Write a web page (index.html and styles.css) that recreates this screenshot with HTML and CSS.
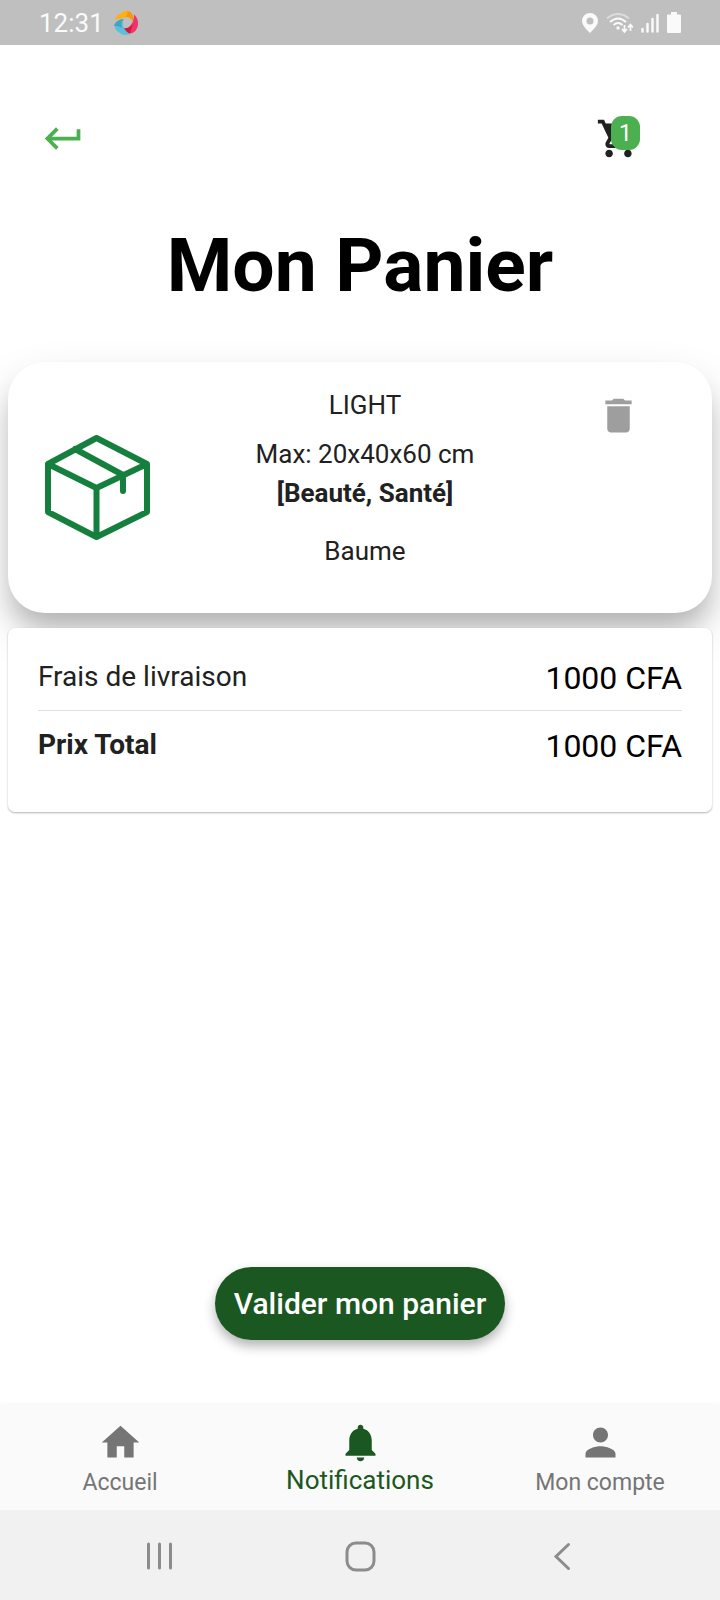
FILE: index.html
```html
<!DOCTYPE html>
<html lang="fr">
<head>
<meta charset="utf-8">
<meta name="viewport" content="width=device-width, initial-scale=1">
<title>Mon Panier</title>
<link rel="stylesheet" href="styles.css">
</head>
<body class="screen">
  <div class="status">
    <div class="status-group">
      <time class="clock">12:31</time>
      <svg class="swirl" viewBox="0 0 24 24" aria-hidden="true">
        <path fill="#ffb010" d="M1 9C2 5 4 3 7 2.500C8 1 10 0 13 0C17 0 20 4 19 10C17 6 11 5 6 8C4 8 2 8 1 9z"/>
        <path fill="#f89808" d="M13 0C17 0 20 4 19 10C16 6 14 5 10 6C13 5 14 3 13 0z"/>
        <path fill="#f0346a" d="M20 3.500C23 6 24.500 10 24 14C23 19 20 23 15 22.500C12 22 10 20 10 17C15 18 20 13 20 3.500z"/>
        <path fill="#d01840" d="M10 17C14 18 17 16 19 12C18 16 17 19 16 22.500C13 22 10 20 10 17z"/>
        <path fill="#5cc0dc" d="M10 8C7 13 10 20 16 23C12 25 8 24 6 22C2 20 0 17 1 13C3 10 6 8 10 8z"/>
        <path fill="#42a4c0" d="M10 8C7 10 7 14 8 17C5 15 2 15 0 15C1 11 5 8 10 8z"/>
      </svg>
    </div>
    <div class="status-group status-icons">
      <svg width="16" height="20" viewBox="0 0 16 20" aria-hidden="true"><path fill="#fafafa" fill-rule="evenodd" d="M8 0a8 8 0 0 1 8 8c0 4-4 8-8 12C4 16 0 12 0 8a8 8 0 0 1 8-8zm0 4.500a3.500 3.500 0 1 0 0 7 3.500 3.500 0 0 0 0-7z"/></svg>
      <svg width="27" height="20" viewBox="0 0 27 20" aria-hidden="true">
        <g fill="none" stroke="#fafafa" stroke-width="2">
          <path stroke="#dcdcdc" d="M1 5.500Q12-3.500 23 5.500"/>
          <path d="M4 9Q12 2 20 9"/><path d="M7.500 12Q12 8 16.500 12"/>
          <path stroke-width="1.700" d="M18.500 12v6.500M16 16l2.500 3 2.500-3M24.500 18v-6.500M22 14.500l2.500-3 2.500 3"/>
        </g>
        <circle cx="12" cy="15" r="1.700" fill="#fafafa"/>
      </svg>
      <svg width="18" height="20" viewBox="0 0 18 20" aria-hidden="true"><path stroke="#fafafa" stroke-width="2.500" stroke-linecap="round" d="M1.500 16v2.500M6.500 11v7.500M11.500 6v12.500M16.500 2v16.500"/></svg>
      <svg width="14" height="21" viewBox="0 0 14 21" aria-hidden="true"><path fill="#fafafa" d="M4 0h6v2.500h3q1 0 1 1V20q0 1-1 1H1q-1 0-1-1V3.500q0-1 1-1h3z"/></svg>
    </div>
  </div>

  <header class="toolbar">
    <button class="icon-button back" aria-label="Retour">
      <svg class="icon" viewBox="0 0 24 24"><path d="M19 7v4H5.830l3.580-3.590L8 6l-6 6 6 6 1.410-1.410L5.830 13H21V7z"/></svg>
    </button>
    <button class="icon-button cart" aria-label="Panier">
      <svg class="icon" viewBox="0 0 24 24"><path d="M7 18c-1.100 0-1.990.9-1.990 2S5.900 22 7 22s2-.9 2-2-.9-2-2-2zM1 2v2h2l3.600 7.590-1.350 2.450c-.16.28-.25.61-.25.960 0 1.100.9 2 2 2h12v-2H7.420c-.14 0-.25-.11-.25-.25l.03-.12.900-1.630h7.450c.75 0 1.410-.41 1.750-1.030l3.580-6.490A1 1 0 0 0 20 4H5.210l-.94-2H1zm16 16c-1.100 0-1.990.9-1.990 2s.89 2 1.990 2 2-.9 2-2-.9-2-2-2z"/></svg>
      <span class="badge">1</span>
    </button>
  </header>

  <main class="content">
    <h1 class="title">Mon Panier</h1>

    <article class="card item">
      <svg class="parcel" viewBox="0 0 105 105" aria-hidden="true">
        <path d="M51.500 3L102 29V77L51.500 102L3 77V29zM3 29L51.500 53L102 29M51.500 53V102M30 14L78 40V56"/>
      </svg>
      <div class="details">
        <p class="name">LIGHT</p>
        <p class="size">Max: 20x40x60 cm</p>
        <p class="tags">[Beauté, Santé]</p>
        <p>Baume</p>
      </div>
      <button class="icon-button delete" aria-label="Supprimer">
        <svg class="icon" viewBox="0 0 24 24"><path d="M6 19c0 1.100.9 2 2 2h8c1.100 0 2-.9 2-2V7H6v12zM19 4h-3.500l-1-1h-5l-1 1H5v2h14V4z"/></svg>
      </button>
    </article>

    <dl class="card summary">
      <div class="row">
        <dt>Frais de livraison</dt>
        <dd>1000 CFA</dd>
      </div>
      <div class="row total">
        <dt>Prix Total</dt>
        <dd>1000 CFA</dd>
      </div>
    </dl>

    <button class="validate">Valider mon panier</button>
  </main>

  <nav class="tabs">
    <a class="tab" href="#accueil">
      <svg class="icon" viewBox="0 0 24 24"><path d="M10 20v-6h4v6h5v-8h3L12 3 2 12h3v8z"/></svg>
      <span>Accueil</span>
    </a>
    <a class="tab active" href="#notifications" aria-current="page">
      <svg class="icon" viewBox="0 0 24 24"><path d="M12 22c1.100 0 2-.9 2-2h-4c0 1.100.89 2 2 2zm6-6v-5c0-3.070-1.640-5.640-4.500-6.320V4c0-.83-.67-1.500-1.500-1.500s-1.500.67-1.500 1.500v.68C7.630 5.360 6 7.920 6 11v5l-2 2v1h16v-1l-2-2z"/></svg>
      <span>Notifications</span>
    </a>
    <a class="tab" href="#compte">
      <svg class="icon" viewBox="0 0 24 24"><path d="M12 12c2.210 0 4-1.790 4-4s-1.790-4-4-4-4 1.790-4 4 1.790 4 4 4zm0 2c-2.670 0-8 1.340-8 4v2h16v-2c0-2.660-5.330-4-8-4z"/></svg>
      <span>Mon compte</span>
    </a>
  </nav>

  <div class="system">
    <button class="system-button" aria-label="Applications récentes"><svg viewBox="0 0 40 40"><path stroke-linecap="round" d="M8.500 9v24M19.500 9v24M30.500 9v24"/></svg></button>
    <button class="system-button" aria-label="Écran d'accueil"><svg viewBox="0 0 40 40"><rect x="7" y="8" width="27" height="27" rx="9"/></svg></button>
    <button class="system-button" aria-label="Précédent"><svg viewBox="0 0 40 40"><path stroke-linecap="round" d="M28.500 9.500L16 21.500L28.500 33.500"/></svg></button>
  </div>
</body>
</html>
```

FILE: styles.css
```css
* {
  box-sizing: border-box;
  margin: 0;
}

.screen {
  display: flex;
  flex-direction: column;
  min-height: 100vh;
  background: #fff;
  color: #212121;
  font-family: Roboto, sans-serif;
  font-size: 26px;
  line-height: 30px;
}

button {
  padding: 0;
  border: 0;
  background: none;
  font: inherit;
  cursor: pointer;
}

svg {
  display: block;
}

.icon {
  width: 45px;
  height: 45px;
  fill: currentColor;
}

/* Status bar */
.status {
  display: flex;
  align-items: center;
  justify-content: space-between;
  height: 45px;
  padding: 0 39px;
  background: #bfbfbf;
  color: #fafafa;
}

.status-group {
  display: flex;
  align-items: center;
  gap: 10px;
}

.status-icons {
  gap: 8px;
}

.swirl {
  width: 24px;
  height: 24px;
}

/* Toolbar */
.toolbar {
  display: flex;
  justify-content: space-between;
  padding: 71px 79px 0 41px;
}

.icon-button {
  position: relative;
  flex: none;
  width: 45px;
  height: 45px;
}

.back {
  color: #4caf50;
}

.cart {
  color: #212121;
}

.badge {
  position: absolute;
  top: 0;
  right: 1px;
  width: 29px;
  height: 34px;
  border-radius: 11px;
  background: #4caf50;
  color: #fff;
  font-size: 23px;
  line-height: 35px;
  text-align: center;
}

/* Cart content */
.content {
  display: flex;
  flex: 1;
  flex-direction: column;
  padding: 60px 8px 64px;
}

.title {
  margin-bottom: 53px;
  color: #000;
  font-size: 75px;
  font-weight: 700;
  line-height: 88px;
  text-align: center;
}

.card {
  background: #fff;
}

.item {
  display: flex;
  align-items: flex-start;
  padding: 28px 71px 47px 37px;
  border-radius: 37px;
  box-shadow: 0 18px 24px -4px rgba(0, 0, 0, 0.18), 0 20px 44px rgba(0, 0, 0, 0.16);
}

.parcel {
  flex: none;
  align-self: center;
  width: 105px;
  height: 105px;
  margin-top: 19px;
  fill: none;
  stroke: #15803d;
  stroke-width: 6;
  stroke-linecap: round;
  stroke-linejoin: round;
}

.details {
  flex: 1;
  padding-right: 16px;
  text-align: center;
}

.name {
  margin-bottom: 19px;
}

.size {
  margin-bottom: 9px;
}

.tags {
  margin-bottom: 28px;
  font-weight: 700;
}

.delete {
  margin-top: 3px;
  color: #9e9e9e;
}

.summary {
  position: relative;
  margin-top: 15px;
  padding: 15px 30px 33px;
  border-radius: 7px;
  box-shadow: 0 1px 2px rgba(0, 0, 0, 0.3);
}

.row {
  display: flex;
  align-items: center;
  justify-content: space-between;
  height: 67px;
  font-size: 28px;
}

.row dd {
  padding-top: 2px;
  color: #000;
  font-size: 32px;
}

.total {
  height: 69px;
  border-top: 1px solid #e0e0e0;
}

.total dt {
  font-weight: 700;
}

.validate {
  align-self: center;
  margin-top: auto;
  padding: 18px 19px;
  border-radius: 37px;
  background: #1b5720;
  box-shadow: 0 6px 12px rgba(0, 0, 0, 0.3);
  color: #fff;
  font-size: 30px;
  font-weight: 500;
  line-height: 37px;
}

/* Bottom navigation */
.tabs {
  display: grid;
  grid-template-columns: repeat(3, 1fr);
  height: 106px;
  background: #fafafa;
  box-shadow: 0 -1px 2px rgba(0, 0, 0, 0.03);
}

.tab {
  display: flex;
  flex-direction: column;
  align-items: center;
  padding-top: 16px;
  color: #757575;
  font-size: 23px;
  line-height: 35px;
  text-decoration: none;
}

.active {
  color: #1b5720;
  font-size: 26px;
  line-height: 30px;
}

/* System navigation */
.system {
  display: flex;
  align-items: center;
  justify-content: space-between;
  height: 90px;
  padding: 0 140px;
  background: #f1f1f1;
}

.system-button {
  width: 40px;
  height: 40px;
}

.system-button svg {
  fill: none;
  stroke: #8c8c8c;
  stroke-width: 3;
}
```
